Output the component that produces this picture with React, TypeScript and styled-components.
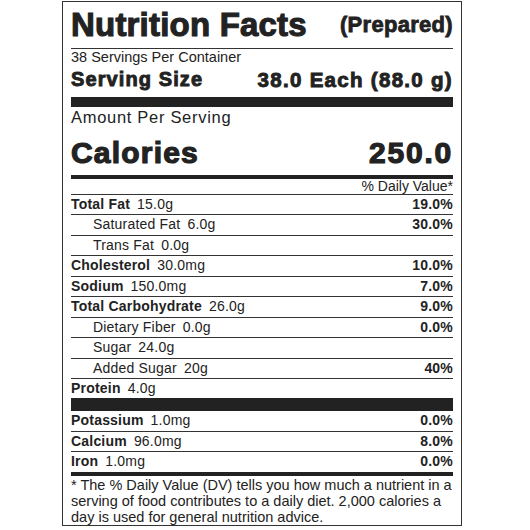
import React from 'react'
import styled, { createGlobalStyle } from 'styled-components'

const GlobalStyle = createGlobalStyle`
  html, body {
    margin: 0;
    padding: 0;
    background: #fff;
  }
  body {
    font-family: "Liberation Sans", Arial, sans-serif;
    color: #222;
  }
`

const Page = styled.div`
  padding: 1px 0 0 62px;
`

const Label = styled.div`
  width: 382px;
  border: 1px solid #333;
  padding: 0 8px;
`

const Heavy = styled.span<{ size: number; stroke?: number; spacing?: number }>`
  font-weight: 900;
  font-size: ${(p) => p.size}px;
  letter-spacing: ${(p) => p.spacing ?? 0}px;
  -webkit-text-stroke: ${(p) => p.stroke ?? 0.8}px #222;
  white-space: nowrap;
`

const Header = styled.div`
  display: flex;
  justify-content: space-between;
  align-items: center;
  height: 46px;
  line-height: 46px;
  border-bottom: 1px solid #333;
`

const Servings = styled.div`
  font-size: 14.5px;
  line-height: 17px;
`

const SizeRow = styled.div`
  display: flex;
  justify-content: space-between;
  align-items: center;
  height: 27px;
  line-height: 27px;
  margin-bottom: 4px;
`

const Bar = styled.div<{ h: number }>`
  height: ${(p) => p.h}px;
  background: #222;
`

const Amount = styled.div`
  font-size: 16.5px;
  letter-spacing: 0.7px;
  line-height: 20px;
`

const CaloriesRow = styled.div`
  display: flex;
  justify-content: space-between;
  align-items: center;
  height: 48px;
  padding-top: 3px;
  box-sizing: border-box;
  line-height: 45px;
`

const DailyHead = styled.div`
  text-align: right;
  font-size: 14px;
  line-height: 15px;
  border-bottom: 1px solid #333;
`

const Row = styled.div<{ indent?: boolean; last?: boolean }>`
  display: flex;
  justify-content: space-between;
  font-size: 14px;
  letter-spacing: 0.2px;
  height: 19.45px;
  line-height: 19.45px;
  padding-left: ${(p) => (p.indent ? 22 : 0)}px;
  border-bottom: ${(p) => (p.last ? 'none' : '1px solid #333')};
  white-space: nowrap;
`

const Name = styled.span<{ bold: boolean }>`
  font-weight: ${(p) => (p.bold ? 700 : 400)};
`

const Amt = styled.span`
  margin-left: 7px;
`

const Pct = styled.span`
  font-weight: 700;
`

const Note = styled.div`
  font-size: 14.5px;
  line-height: 16px;
  padding-top: 1px;
  white-space: nowrap;
`

type Nutrient = { name: string; amount: string; pct?: string; bold?: boolean; indent?: boolean }

const main: Nutrient[] = [
  { name: 'Total Fat', amount: '15.0g', pct: '19.0%', bold: true },
  { name: 'Saturated Fat', amount: '6.0g', pct: '30.0%', indent: true },
  { name: 'Trans Fat', amount: '0.0g', indent: true },
  { name: 'Cholesterol', amount: '30.0mg', pct: '10.0%', bold: true },
  { name: 'Sodium', amount: '150.0mg', pct: '7.0%', bold: true },
  { name: 'Total Carbohydrate', amount: '26.0g', pct: '9.0%', bold: true },
  { name: 'Dietary Fiber', amount: '0.0g', pct: '0.0%', indent: true },
  { name: 'Sugar', amount: '24.0g', indent: true },
  { name: 'Added Sugar', amount: '20g', pct: '40%', indent: true },
  { name: 'Protein', amount: '4.0g', bold: true },
]

const minerals: Nutrient[] = [
  { name: 'Potassium', amount: '1.0mg', pct: '0.0%', bold: true },
  { name: 'Calcium', amount: '96.0mg', pct: '8.0%', bold: true },
  { name: 'Iron', amount: '1.0mg', pct: '0.0%', bold: true },
]

const renderRows = (list: Nutrient[]) =>
  list.map((n, i) => (
    <Row key={n.name} indent={n.indent} last={i === list.length - 1}>
      <span>
        <Name bold={!!n.bold}>{n.name}</Name>
        <Amt>{n.amount}</Amt>
      </span>
      {n.pct && <Pct>{n.pct}</Pct>}
    </Row>
  ))

export default function App() {
  return (
    <Page>
      <GlobalStyle />
      <Label>
        <Header>
          <Heavy size={33} stroke={1.1} spacing={0.2}>Nutrition Facts</Heavy>
          <Heavy size={22} stroke={0.8} spacing={0.3}>(Prepared)</Heavy>
        </Header>
        <Servings>38 Servings Per Container</Servings>
        <SizeRow>
          <Heavy size={20} stroke={0.9} spacing={1.1}>Serving Size</Heavy>
          <Heavy size={20.5} stroke={0.9} spacing={1.3}>38.0 Each (88.0 g)</Heavy>
        </SizeRow>
        <Bar h={10} />
        <Amount>Amount Per Serving</Amount>
        <CaloriesRow>
          <Heavy size={30} stroke={1.2} spacing={1.2}>Calories</Heavy>
          <Heavy size={30} stroke={1.2} spacing={1.8}>250.0</Heavy>
        </CaloriesRow>
        <Bar h={4} />
        <DailyHead>% Daily Value*</DailyHead>
        {renderRows(main)}
        <Bar h={13} />
        {renderRows(minerals)}
        <Bar h={4} />
        <Note>
          * The % Daily Value (DV) tells you how much a nutrient in a
          <br />
          serving of food contributes to a daily diet. 2,000 calories a
          <br />
          day is used for general nutrition advice.
        </Note>
      </Label>
    </Page>
  )
}
